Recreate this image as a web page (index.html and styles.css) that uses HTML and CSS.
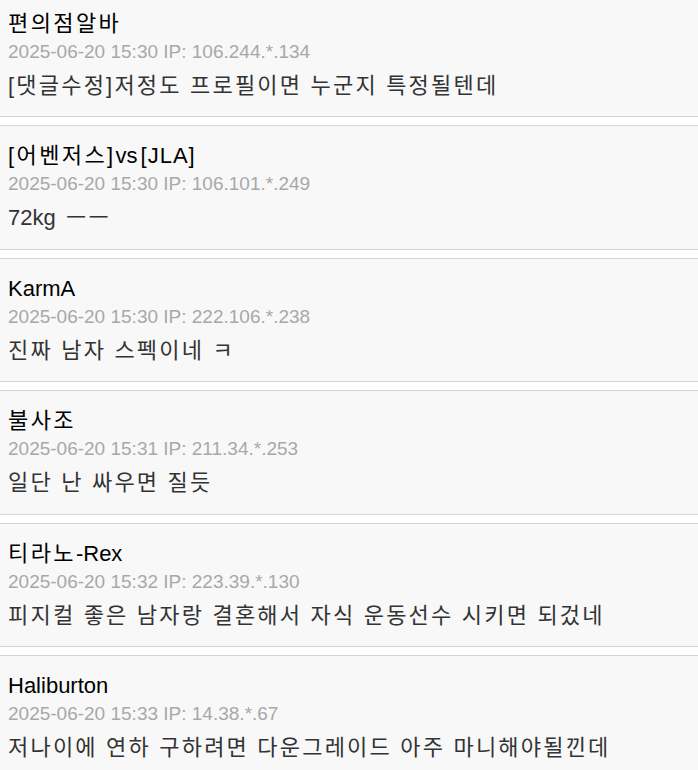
FILE: index.html
```html
<!DOCTYPE html>
<html lang="ko">
<head>
<meta charset="utf-8">
<title>댓글</title>
<link rel="stylesheet" href="styles.css">
</head>
<body>
<ul class="comments">
  <li class="comment">
    <div class="name"><span class="ko">편의점알바</span></div>
    <div class="meta">2025-06-20 15:30 IP: 106.244.*.134</div>
    <div class="text">[댓글수정]저정도 프로필이면 누군지 특정될텐데</div>
  </li>
  <li class="comment">
    <div class="name"><span class="ko">[어벤저스]</span>vs<span class="tag">[JLA]</span></div>
    <div class="meta">2025-06-20 15:30 IP: 106.101.*.249</div>
    <div class="text"><span class="lat">72kg</span> ㅡㅡ</div>
  </li>
  <li class="comment">
    <div class="name">KarmA</div>
    <div class="meta">2025-06-20 15:30 IP: 222.106.*.238</div>
    <div class="text">진짜 남자 스펙이네 ㅋ</div>
  </li>
  <li class="comment">
    <div class="name"><span class="ko">불사조</span></div>
    <div class="meta">2025-06-20 15:31 IP: 211.34.*.253</div>
    <div class="text">일단 난 싸우면 질듯</div>
  </li>
  <li class="comment">
    <div class="name"><span class="ko">티라노</span>-Rex</div>
    <div class="meta">2025-06-20 15:32 IP: 223.39.*.130</div>
    <div class="text">피지컬 좋은 남자랑 결혼해서 자식 운동선수 시키면 되겄네</div>
  </li>
  <li class="comment">
    <div class="name">Haliburton</div>
    <div class="meta">2025-06-20 15:33 IP: 14.38.*.67</div>
    <div class="text">저나이에 연하 구하려면 다운그레이드 아주 마니해야될낀데</div>
  </li>
</ul>
</body>
</html>
```

FILE: styles.css
```css
html, body {
  margin: 0;
  padding: 0;
  background: #ffffff;
}

body {
  font-family: "Liberation Sans", "Noto Sans CJK KR", sans-serif;
  overflow: hidden;
}

.comments {
  list-style: none;
  margin: 0;
  padding: 0;
  display: flex;
  flex-direction: column;
  gap: 8px;
}

.comment {
  background: #f8f8f8;
  border-top: 1px solid #d2d2d8;
  border-bottom: 1px solid #d2d2d8;
  padding: 14px 8px 14.5px 8px;
}

.comment:first-child {
  border-top: none;
  padding-top: 7.5px;
}

.name {
  font-size: 22px;
  line-height: 32px;
  color: #000;
}

.name .ko {
  letter-spacing: 2.4px;
}

.name .tag {
  margin-left: 3px;
  letter-spacing: 1px;
}

.meta {
  font-size: 19px;
  line-height: 24px;
  color: #a8a8a8;
}

.text {
  margin-top: 6px;
  font-size: 22px;
  line-height: 32px;
  letter-spacing: 2.2px;
  color: #333;
}

.text .lat {
  letter-spacing: 0;
  margin-right: 2px;
}
```
